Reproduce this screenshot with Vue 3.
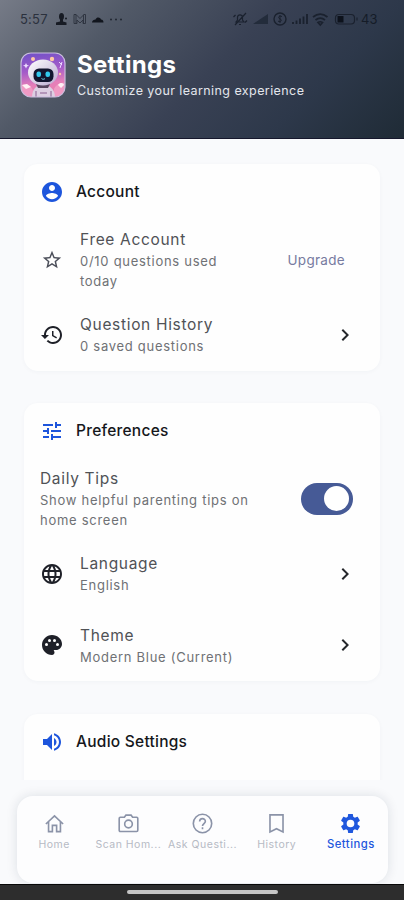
<script setup>
import { ref } from 'vue'

const icons = {
  account: 'M12 2C6.48 2 2 6.48 2 12s4.48 10 10 10 10-4.48 10-10S17.52 2 12 2zm0 3c1.66 0 3 1.34 3 3s-1.34 3-3 3-3-1.34-3-3 1.34-3 3-3zm0 14.2c-2.5 0-4.71-1.28-6-3.22.03-1.99 4-3.08 6-3.08 1.99 0 5.97 1.09 6 3.08-1.29 1.94-3.5 3.22-6 3.22z',
  tune: 'M3 17v2h6v-2H3zM3 5v2h10V5H3zm10 16v-2h8v-2h-8v-2h-2v6h2zM7 9v2H3v2h4v2h2V9H7zm14 4v-2H11v2h10zm-6-4h2V7h4V5h-4V3h-2v6z',
  volume: 'M3 9v6h4l5 5V4L7 9H3zm13.5 3c0-1.77-1.02-3.29-2.5-4.03v8.05c1.48-.73 2.5-2.25 2.5-4.02zM14 3.23v2.06c2.89.86 5 3.54 5 6.71s-2.11 5.85-5 6.71v2.06c4.01-.91 7-4.49 7-8.77s-2.99-7.86-7-8.77z',
  star: 'M22 9.24l-7.19-.62L12 2 9.19 8.63 2 9.24l5.46 4.73L5.82 21 12 17.27 18.18 21l-1.63-7.03L22 9.24zM12 15.4l-3.76 2.27 1-4.28-3.32-2.88 4.38-.38L12 6.1l1.71 4.04 4.38.38-3.32 2.88 1 4.28L12 15.4z',
  history: 'M13 3c-4.97 0-9 4.03-9 9H1l3.89 3.89.07.14L9 12H6c0-3.87 3.13-7 7-7s7 3.13 7 7-3.13 7-7 7c-1.93 0-3.68-.79-4.94-2.06l-1.42 1.42C8.27 19.99 10.51 21 13 21c4.97 0 9-4.03 9-9s-4.03-9-9-9zm-1 5v5l4.28 2.54.72-1.21-3.5-2.08V8H12z',
  language: 'M11.99 2C6.47 2 2 6.48 2 12s4.47 10 9.99 10C17.52 22 22 17.52 22 12S17.52 2 11.99 2zm6.93 6h-2.95c-.32-1.25-.78-2.45-1.38-3.56 1.84.63 3.37 1.91 4.33 3.56zM12 4.04c.83 1.2 1.48 2.53 1.91 3.96h-3.82c.43-1.43 1.08-2.76 1.91-3.96zM4.26 14C4.1 13.36 4 12.69 4 12s.1-1.36.26-2h3.38c-.08.66-.14 1.32-.14 2 0 .68.06 1.34.14 2H4.26zm.82 2h2.95c.32 1.25.78 2.45 1.38 3.56-1.84-.63-3.37-1.9-4.33-3.56zm2.95-8H5.08c.96-1.66 2.49-2.93 4.33-3.56C8.81 5.55 8.35 6.75 8.03 8zM12 19.96c-.83-1.2-1.48-2.53-1.91-3.96h3.82c-.43 1.43-1.08 2.76-1.91 3.96zM14.34 14H9.66c-.09-.66-.16-1.32-.16-2 0-.68.07-1.35.16-2h4.68c.09.65.16 1.32.16 2 0 .68-.07 1.34-.16 2zm.25 5.56c.6-1.11 1.06-2.31 1.38-3.56h2.95c-.96 1.65-2.49 2.93-4.33 3.56zM16.36 14c.08-.66.14-1.32.14-2 0-.68-.06-1.34-.14-2h3.38c.16.64.26 1.31.26 2s-.1 1.36-.26 2h-3.38z',
  palette: 'M12 2C6.49 2 2 6.49 2 12s4.49 10 10 10c1.38 0 2.5-1.12 2.5-2.5 0-.61-.23-1.2-.64-1.67-.08-.1-.13-.21-.13-.33 0-.28.22-.5.5-.5H16c3.31 0 6-2.69 6-6 0-4.96-4.49-9-10-9zM17.5 13a1.5 1.5 0 1 1 0-3 1.5 1.5 0 0 1 0 3zM14.5 9a1.5 1.5 0 1 1 0-3 1.5 1.5 0 0 1 0 3zM5 11.5a1.5 1.5 0 1 1 3 0 1.5 1.5 0 0 1-3 0zM11 7.5a1.5 1.5 0 1 1-3 0 1.5 1.5 0 0 1 3 0z',
  chevron: 'M10 6L8.59 7.41 13.17 12l-4.58 4.59L10 18l6-6z'
}

const tipsOn = ref(true)

const sections = [
  {
    title: 'Account', icon: 'account',
    rows: [
      { icon: 'star', title: 'Free Account', sub: '0/10 questions used today', action: 'Upgrade', tall: true },
      { icon: 'history', title: 'Question History', sub: '0 saved questions' }
    ]
  },
  {
    title: 'Preferences', icon: 'tune',
    rows: [
      { title: 'Daily Tips', sub: 'Show helpful parenting tips on home screen', toggle: true, tall: true },
      { icon: 'language', title: 'Language', sub: 'English' },
      { icon: 'palette', title: 'Theme', sub: 'Modern Blue (Current)' }
    ]
  },
  { title: 'Audio Settings', icon: 'volume', rows: [], cut: true }
]

const tabs = [
  { id: 'home', label: 'Home' },
  { id: 'scan', label: 'Scan Hom...' },
  { id: 'ask', label: 'Ask Questi...' },
  { id: 'history', label: 'History' },
  { id: 'settings', label: 'Settings' }
]
</script>

<template>
  <div class="screen">
    <header class="header">
      <div class="status">
        <span class="clock">5:57</span>
        <svg class="status-left" width="70" height="14" viewBox="0 0 70 14">
          <ellipse cx="6.500" cy="4.500" rx="2.500" ry="3.500" fill="#171b24" />
          <path d="M5 7h3v2.500l3.500 1V13H1v-2.500l4-1z" fill="#171b24" />
          <circle cx="11" cy="6.500" r="1" fill="#171b24" />
          <path d="M19 2.500h2l4 4 4-4h1.500v9H28V8l-3 3-3-3v3.500h-3zM21 2.500v9M28.500 2.500v9" fill="none" stroke="#2b313d" stroke-width="0.900" />
          <path d="M37 10.500c0-2 2-3 3.500-3 1-3 5-2.500 5.500 0 2 0 2.500 1.500 2.500 3z" fill="#11151d" />
          <g fill="#202631"><circle cx="56" cy="7.500" r="1" /><circle cx="61" cy="7.500" r="1" /><circle cx="66" cy="7.500" r="1" /></g>
        </svg>
        <svg class="status-right" width="128" height="16" viewBox="0 0 128 16" fill="none" stroke="#1a212e">
          <path d="M4 11h8l-1.500-2V6.500C10.500 3 5.500 3 5.500 6.500V9zM3 14L14 2M1.500 6l2-2M13 11.500l2-2M7 13.500h2" stroke-width="1.200" />
          <path d="M21 13L36 3v10z" fill="#232c3b" stroke="none" />
          <circle cx="48" cy="8" r="6" stroke-width="1.400" />
          <path d="M50 5.500c-3-1-4 .5-3 1.800l2 1.200c1 1.500-.5 2.700-3 1.700M48 4v8" stroke-width="1" />
          <path d="M61 13v-2M64.500 13V9.500M68 13V7.500M71.500 13V5.500M75 13V3" stroke-width="1.800" />
          <path d="M81 6c4.500-3.700 10-3.700 14.500 0M83.500 9c3-2.500 6.500-2.500 9.500 0M86 11.500c1.500-1 3-1 4.500 0L88.300 14z" stroke-width="1.700" />
          <rect x="103.500" y="3.500" width="19" height="9.500" rx="3.500" stroke-width="1.200" />
          <path d="M105.500 5h6v6.500h-6z" fill="#0d121c" stroke="none" />
          <path d="M125 6.500v3" stroke-width="1.200" />
        </svg>
        <span class="battery">43</span>
      </div>
      <div class="brand">
        <svg class="logo" width="46" height="46" viewBox="0 0 46 46">
          <defs>
            <linearGradient id="sky" x1="0" y1="0" x2="0.150" y2="1">
              <stop offset="0" stop-color="#6b4fc6" />
              <stop offset="0.450" stop-color="#a45bc9" />
              <stop offset="0.750" stop-color="#e57fb9" />
              <stop offset="1" stop-color="#e97fae" />
            </linearGradient>
            <linearGradient id="shell" x1="0" y1="0" x2="1" y2="1">
              <stop offset="0" stop-color="#fff" />
              <stop offset="1" stop-color="#b9a9d0" />
            </linearGradient>
            <clipPath id="tile"><rect x="1" y="1" width="44" height="44" rx="10" /></clipPath>
          </defs>
          <g clip-path="url(#tile)">
            <rect width="46" height="46" fill="url(#sky)" />
            <path d="M0 34c5-3 8-2 11 1s2 7 2 11H0zM46 31c-6-1-10 2-12 6v9h12z" fill="#f09ac4" />
            <g fill="#ffc9a6"><circle cx="13" cy="7" r="2" /><circle cx="32" cy="7" r="2.200" /><circle cx="40" cy="22" r="1.200" /></g>
            <path d="M6 11l1 2 2 .5-2 1-1 2-1-2-2-1 2-.5z" fill="#eddcff" />
            <path d="M39 10l3 3M42 10l-2 6" stroke="#eddcff" stroke-width="1" />
            <path d="M2 33l5-1 4 3-5 2zM38 33c2-3 6-2 6 0l-3 3z" fill="#fff0f5" />
            <path d="M12 46c0-9 4-13 11-13s12 4 12 13z" fill="#dccfe2" />
            <path d="M16 32h14l-2 4H18z" fill="#57465f" />
            <path d="M16 39v7M31 39v7M20 41h7" stroke="#a584ac" stroke-width="1.500" />
            <ellipse cx="23" cy="20.500" rx="15" ry="13" fill="url(#shell)" />
            <rect x="13.500" y="16.500" width="20" height="13.500" rx="5.500" fill="#12152f" />
            <rect x="16.500" y="19.500" width="4.500" height="5.500" rx="2" fill="#31c8ed" />
            <rect x="25.500" y="19.500" width="4.500" height="5.500" rx="2" fill="#31c8ed" />
            <path d="M21.500 26.500c1 1 2.500 1 3.500 0" stroke="#73d4ec" fill="none" />
          </g>
          <rect x="1" y="1" width="44" height="44" rx="10" fill="none" stroke="#c9bddd" stroke-width="1.200" />
        </svg>
        <div class="brand-text">
          <h1>Settings</h1>
          <p>Customize your learning experience</p>
        </div>
      </div>
    </header>

    <main class="content">
      <section v-for="s in sections" :key="s.title" class="card" :class="{ cut: s.cut }">
        <div class="card-head">
          <svg width="24" height="24" viewBox="0 0 24 24"><path :d="icons[s.icon]" /></svg>
          <h2>{{ s.title }}</h2>
        </div>
        <div v-for="r in s.rows" :key="r.title" class="row" :class="{ tall: r.tall }">
          <svg v-if="r.icon" class="row-icon" :class="r.icon" width="24" height="24" viewBox="0 0 24 24"><path :d="icons[r.icon]" /></svg>
          <div class="row-text" :class="{ narrow: r.action }">
            <div class="row-title">{{ r.title }}</div>
            <div class="row-sub">{{ r.sub }}</div>
          </div>
          <span v-if="r.action" class="action">{{ r.action }}</span>
          <button v-else-if="r.toggle" class="switch" :class="{ on: tipsOn }" @click="tipsOn = !tipsOn"><i></i></button>
          <svg v-else class="chevron" width="24" height="24" viewBox="0 0 24 24"><path :d="icons.chevron" /></svg>
        </div>
      </section>
    </main>

    <div class="dock">
      <nav class="nav">
        <div v-for="t in tabs" :key="t.id" class="tab" :class="{ active: t.id === 'settings' }">
          <svg width="24" height="24" viewBox="0 0 24 24" fill="none" stroke="currentColor" stroke-width="1.700">
            <path v-if="t.id === 'home'" d="M3 12.500L12 4l9 8.500M5.800 10.500V20.500h4v-6.500h4.400v6.500h4V10.500" />
            <template v-else-if="t.id === 'scan'">
              <path d="M3.500 5.500h4.200L9.300 3.300h5.400l1.600 2.200h4.200q1.200 0 1.200 1.200v12.400q0 1.200-1.200 1.200h-17q-1.200 0-1.200-1.200V6.700q0-1.200 1.200-1.200z" />
              <circle cx="12" cy="12.500" r="4" />
            </template>
            <template v-else-if="t.id === 'ask'">
              <circle cx="12" cy="12" r="9.600" />
              <path d="M9 10c0-4 6-4 6-.3 0 2.300-3 2.500-3 5M12 16v2" />
            </template>
            <path v-else-if="t.id === 'history'" d="M5.200 3h13.600v17.800L12 17.500 5.200 20.800z" />
            <path v-else fill="currentColor" stroke="none" fill-rule="evenodd" d="M19.430 12.980c.04-.32.07-.64.07-.98s-.03-.66-.07-.98l2.110-1.650c.19-.15.24-.42.12-.64l-2-3.460c-.12-.22-.39-.3-.61-.22l-2.490 1c-.52-.4-1.080-.73-1.690-.98l-.38-2.650C14.460 2.180 14.250 2 14 2h-4c-.25 0-.46.18-.49.42l-.38 2.650c-.61.25-1.170.59-1.690.98l-2.490-1c-.23-.09-.49 0-.61.22l-2 3.460c-.13.22-.07.49.12.64l2.110 1.650c-.04.32-.07.65-.07.98s.03.66.07.98l-2.110 1.650c-.19.15-.24.42-.12.64l2 3.460c.12.22.39.3.61.22l2.490-1c.52.4 1.080.73 1.690.98l.38 2.650c.03.24.24.42.49.42h4c.25 0 .46-.18.49-.42l.38-2.650c.61-.25 1.170-.59 1.690-.98l2.490 1c.23.09.49 0 .61-.22l2-3.460c.12-.22.07-.49-.12-.64zM12 16a4 4 0 1 1 0-8 4 4 0 0 1 0 8z" />
          </svg>
          <span>{{ t.label }}</span>
        </div>
      </nav>
    </div>
    <div class="system-bar"><i></i></div>
  </div>
</template>

<style>
body {
  margin: 0;
  background: #f9fafc;
}
</style>

<style scoped>
.screen {
  box-sizing: border-box;
  display: flex;
  flex-direction: column;
  width: 404px;
  height: 900px;
  overflow: hidden;
  background: #f9fafc;
  font-family: Inter, sans-serif;
}
h1, h2, p { margin: 0; }
.header {
  box-sizing: border-box;
  flex: none;
  height: 139px;
  padding: 11px 19px 0 20px;
  background: linear-gradient(135deg, #767b87 0%, #515967 25%, #394154 52%, #2d384a 75%, #1f2b36 100%);
  border-bottom: 1px solid #15172c;
}
.status {
  display: flex;
  align-items: center;
  height: 16px;
  color: #2b313d;
}
.clock {
  width: 35px;
  font-size: 13px;
  letter-spacing: 0.2px;
}
.status-right { margin-left: 107px; }
.battery {
  margin-left: 1px;
  font-size: 13px;
  color: #151c28;
}
.status svg, .battery { flex: none; }
.brand {
  display: flex;
  margin-top: 25px;
}
.logo { flex: none; }
.brand-text { margin-left: 11px; color: #fff; }
h1 {
  margin-top: -2px;
  font-size: 24px;
  line-height: 30px;
  font-weight: 700;
  letter-spacing: 0.3px;
}
.brand-text p {
  margin-top: 2px;
  font-size: 12.5px;
  line-height: 18px;
  letter-spacing: 0.42px;
  color: #e3e6ec;
  white-space: nowrap;
}
.content {
  flex: none;
  display: flex;
  flex-direction: column;
  gap: 32.500px;
  box-sizing: border-box;
  height: 641px;
  padding: 25px 24px 0;
  overflow: hidden;
}
.card {
  flex: none;
  background: #fefefe;
  border-radius: 14px;
  box-shadow: 0 1px 4px rgba(30, 50, 90, 0.035);
}
.card.cut { height: 100px; }
.card-head {
  display: flex;
  align-items: center;
  height: 56px;
  padding-left: 16px;
  gap: 12px;
}
.card-head path { fill: #1d55dc; }
h2 {
  font-size: 15.5px;
  font-weight: 500;
  line-height: 24px;
  color: #15171b;
  letter-spacing: 0.25px;
}
.row {
  display: flex;
  align-items: center;
  height: 71.5px;
  padding: 0 23px 0 16px;
}
.row.tall { height: 79px; }
.row-icon { flex: none; margin-right: 16px; fill: #1e2028; }
.row-icon.star { fill: #4b4e59; padding: 1px; width: 22px; height: 22px; }
.row-text { width: 222px; }
.row-text.narrow { width: 160px; }
.row-title {
  font-size: 15.5px;
  line-height: 23px;
  letter-spacing: 0.68px;
  color: #505256;
}
.row-sub {
  font-size: 13px;
  line-height: 20px;
  letter-spacing: 0.72px;
  color: #6f7175;
}
.chevron { margin-left: auto; fill: #25272b; }
.action {
  margin: 0 12px 0 auto;
  font-size: 13.5px;
  letter-spacing: 0.3px;
  color: #777ba0;
}
.switch {
  display: flex;
  align-items: center;
  box-sizing: border-box;
  width: 52px;
  height: 32px;
  margin: 0 4px 0 auto;
  padding: 0 4px;
  border: 0;
  border-radius: 16px;
  background: #a5abbb;
}
.switch.on { justify-content: flex-end; background: #465a96; }
.switch i {
  width: 25px;
  height: 25px;
  border-radius: 50%;
  background: #fff;
}
.dock {
  flex: none;
  box-sizing: border-box;
  height: 104px;
  padding: 16px 16px 0 17px;
}
.nav {
  box-sizing: border-box;
  display: flex;
  height: 87px;
  padding: 16px 0 0;
  background: #fdfdfe;
  border-radius: 16px;
  box-shadow: 0 0 12px rgba(20, 30, 60, 0.12);
}
.tab {
  flex: 1;
  min-width: 0;
  display: flex;
  flex-direction: column;
  align-items: center;
  color: #8b93a8;
}
.tab svg { width: 23px; height: 23px; }
.tab span {
  margin-top: 2px;
  font-size: 10.5px;
  line-height: 16px;
  letter-spacing: 0.5px;
  color: #b6bac4;
  white-space: nowrap;
}
.tab.active, .tab.active span { color: #1f57dd; }
.tab.active span {
  margin-top: 1px;
  font-size: 11.3px;
  font-weight: 500;
}
.system-bar {
  flex: none;
  box-sizing: border-box;
  height: 16px;
  padding-top: 5px;
  background: #2d2d2d;
  border-top: 1px solid #080808;
}
.system-bar i {
  display: block;
  width: 151px;
  height: 4px;
  margin: 0 auto;
  border-radius: 2px;
  background: #c6c6c6;
}
</style>
